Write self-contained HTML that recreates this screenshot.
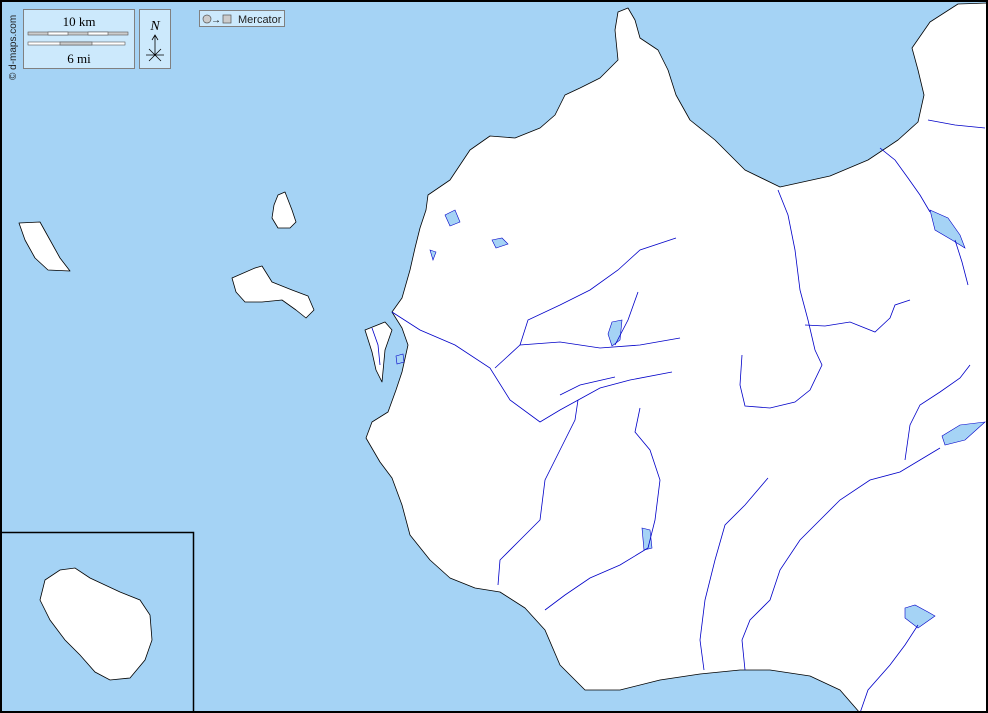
<!DOCTYPE html>
<html><head><meta charset="utf-8"><style>
html,body{margin:0;padding:0;background:#a5d3f5;}
svg{display:block}
</style></head><body>
<svg width="988" height="713" viewBox="0 0 988 713" xmlns="http://www.w3.org/2000/svg">
<rect x="0" y="0" width="988" height="713" fill="#a5d3f5"/>
<g fill="#fff" stroke="#000" stroke-width="0.8" stroke-linejoin="round">
<path d="M428,195 L450,180 470,150 490,136 515,138 540,128 555,115 565,95 580,88 600,78 618,60 615,30 618,12 628,8 635,20 640,38 658,50 668,70 676,95 690,120 715,140 745,170 780,187 830,176 868,160 898,140 918,122 924,95 918,70 912,48 930,22 958,4 988,3 L988,713 L860,713 840,690 810,676 770,670 740,670 700,674 660,680 620,690 585,690 560,665 545,630 525,608 500,592 475,588 450,578 430,560 410,535 402,505 392,478 380,462 366,438 372,422 388,412 396,390 402,372 408,345 402,328 392,312 402,298 410,270 415,248 420,228 426,210 Z"/>
<path d="M19,223 L40,222 50,240 60,258 70,271 48,270 35,258 25,240 Z"/>
<path d="M278,195 L285,192 292,210 296,222 290,228 278,228 272,218 274,205 Z"/>
<path d="M232,278 L255,268 262,266 272,282 292,290 308,296 314,310 306,318 296,310 282,300 262,302 245,302 236,292 Z"/>
<path d="M365,330 L385,322 392,330 385,350 382,382 376,370 372,352 Z"/>
</g>
<g fill="#a5d3f5" stroke="#0000c8" stroke-width="0.6">
<path d="M445,215 L455,210 460,222 450,226 Z"/>
<path d="M492,240 L502,238 508,244 496,248 Z"/>
<path d="M430,250 L436,252 433,260 Z"/>
<path d="M612,322 L622,320 620,340 612,346 608,334 Z"/>
<path d="M930,210 L948,218 960,235 965,248 952,240 935,230 Z"/>
<path d="M942,436 L960,425 985,422 965,440 945,445 Z"/>
<path d="M642,528 L650,530 652,548 644,550 Z"/>
<path d="M905,608 L915,605 928,612 935,616 918,628 905,618 Z"/>
<path d="M396,356 L403,354 404,362 397,364 Z"/>
</g>
<g fill="none" stroke="#0000c8" stroke-width="0.8">
<path d="M392,312 L420,330 455,345 490,368 510,400 540,422 560,410 600,388 630,380 672,372"/>
<path d="M495,368 L520,345 560,342 600,348 640,345 680,338"/>
<path d="M520,345 L528,320 560,305 590,290 618,270 640,250 676,238"/>
<path d="M615,345 L628,320 638,292"/>
<path d="M560,395 L580,385 615,377"/>
<path d="M545,610 L565,595 590,578 620,565 648,548 655,520 660,480 650,450 635,432 640,408"/>
<path d="M498,585 L500,560 520,540 540,520 545,480 560,450 575,420 578,400"/>
<path d="M778,190 L788,215 795,250 800,290 808,320 815,350 822,365 810,390 795,402 770,408 745,406 740,385 742,355"/>
<path d="M805,325 L825,326 850,322 875,332 890,318 895,305 910,300"/>
<path d="M880,148 L895,160 908,178 920,195 930,212"/>
<path d="M955,240 L962,262 968,285"/>
<path d="M928,120 L955,125 985,128"/>
<path d="M704,670 L700,640 705,600 715,560 725,525 745,505 768,478"/>
<path d="M745,670 L742,640 750,620 770,600 780,570 800,540 820,520 840,500 870,480 900,472 920,460 940,448"/>
<path d="M860,713 L868,690 890,665 905,645 918,625"/>
<path d="M905,460 L910,425 920,405 940,392 960,378 970,365"/>
<path d="M372,328 L378,345 380,365"/>
</g>
<!-- inset -->
<rect x="0.5" y="532.5" width="193" height="180" fill="#a5d3f5" stroke="#000" stroke-width="1.5"/>
<path d="M45,580 L60,570 75,568 90,578 105,585 120,592 140,600 150,615 152,640 145,660 130,678 110,680 95,672 80,655 65,640 50,620 40,600 Z" fill="#fff" stroke="#000" stroke-width="0.8"/>
<!-- frame -->
<rect x="1" y="1" width="986" height="711" fill="none" stroke="#000" stroke-width="2"/>
<!-- legend -->
<rect x="23.5" y="9.5" width="111" height="59" fill="#cce9fc" stroke="#808080"/>
<text x="79" y="26" font-family="Liberation Serif" font-size="13" text-anchor="middle">10 km</text>
<rect x="28" y="32" width="100" height="3" fill="#ccc" stroke="#555" stroke-width="0.6"/>
<rect x="48" y="32" width="20" height="3" fill="#fff" stroke="#555" stroke-width="0.6"/>
<rect x="88" y="32" width="20" height="3" fill="#fff" stroke="#555" stroke-width="0.6"/>
<rect x="28" y="42" width="97" height="3" fill="#fff" stroke="#555" stroke-width="0.6"/>
<rect x="60" y="42" width="32" height="3" fill="#ccc" stroke="#555" stroke-width="0.6"/>
<text x="79" y="63" font-family="Liberation Serif" font-size="13" text-anchor="middle">6 mi</text>
<rect x="139.5" y="9.5" width="31" height="59" fill="#cce9fc" stroke="#808080"/>
<text x="155" y="30" font-family="Liberation Serif" font-size="14" font-style="italic" text-anchor="middle">N</text>
<path d="M155,55 V35 M152,40 L155,35 158,40 M146,55 H164 M149,49 L161,61 M161,49 L149,61" stroke="#000" stroke-width="0.8" fill="none"/>
<rect x="199.5" y="10.5" width="85" height="16" fill="#cce9fc" stroke="#808080"/>
<circle cx="207" cy="19" r="4" fill="#ccc" stroke="#555" stroke-width="0.7"/>
<text x="211" y="23" font-family="Liberation Sans" font-size="10">→</text>
<rect x="223" y="15" width="8" height="8" fill="#ccc" stroke="#555" stroke-width="0.7"/>
<text x="238" y="23" font-family="Liberation Sans" font-size="11" fill="#222">Mercator</text>
<text transform="translate(16,80) rotate(-90)" font-family="Liberation Sans" font-size="10" fill="#222">© d-maps.com</text>
</svg>
</body></html>
